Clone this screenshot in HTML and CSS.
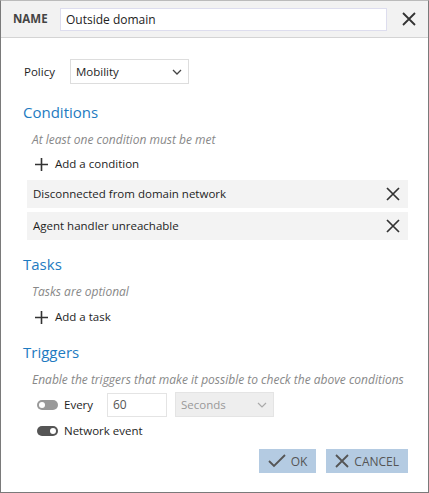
FILE: index.html
```html
<!DOCTYPE html>
<html lang="en">
<head>
    <meta charset="UTF-8">
    <title>Outside domain</title>
    <link rel="stylesheet" href="styles.css">
</head>
<body>
    <div class="dialog">
        <div class="header">
            <span class="name-label">NAME</span>
            <input class="name-input" type="text" value="Outside domain">
            <button class="icon-btn close-btn" title="Close">
                <svg width="16" height="16" viewBox="0 0 16 16"><path d="M2 2L14 14M14 2L2 14" stroke="#333" stroke-width="1.8"/></svg>
            </button>
        </div>

        <div class="content">
            <div class="policy-row">
                <label for="policy">Policy</label>
                <div class="select">
                    <span>Mobility</span>
                    <svg width="10" height="6" viewBox="0 0 10 6"><path d="M1 1L5 5L9 1" fill="none" stroke="#444" stroke-width="1.3"/></svg>
                </div>
            </div>

            <h2>Conditions</h2>
            <p class="hint">At least one condition must be met</p>
            <div class="add-link">
                <svg width="13" height="13" viewBox="0 0 13 13"><path d="M6.5 0V13M0 6.5H13" stroke="#333" stroke-width="1.6"/></svg>
                <span>Add a condition</span>
            </div>
            <div class="item">
                <span>Disconnected from domain network</span>
                <svg width="14" height="14" viewBox="0 0 14 14"><path d="M1 1L13 13M13 1L1 13" stroke="#333" stroke-width="1.7"/></svg>
            </div>
            <div class="item">
                <span>Agent handler unreachable</span>
                <svg width="14" height="14" viewBox="0 0 14 14"><path d="M1 1L13 13M13 1L1 13" stroke="#333" stroke-width="1.7"/></svg>
            </div>

            <h2 class="tasks-title">Tasks</h2>
            <p class="hint">Tasks are optional</p>
            <div class="add-link">
                <svg width="13" height="13" viewBox="0 0 13 13"><path d="M6.5 0V13M0 6.5H13" stroke="#333" stroke-width="1.6"/></svg>
                <span>Add a task</span>
            </div>

            <h2 class="triggers-title">Triggers</h2>
            <p class="hint">Enable the triggers that make it possible to check the above conditions</p>
            <div class="trigger-row">
                <span class="toggle"></span>
                <span class="trigger-label">Every</span>
                <input class="num-input" type="text" value="60">
                <div class="select disabled">
                    <span>Seconds</span>
                    <svg width="10" height="6" viewBox="0 0 10 6"><path d="M1 1L5 5L9 1" fill="none" stroke="#aaa" stroke-width="1.2"/></svg>
                </div>
            </div>
            <div class="trigger-row network-row">
                <span class="toggle on"></span>
                <span>Network event</span>
            </div>

            <div class="actions">
                <button class="btn">
                    <svg width="18" height="14" viewBox="0 0 18 14"><path d="M1 7L6 12L17 1" fill="none" stroke="#555" stroke-width="1.8"/></svg>
                    OK
                </button>
                <button class="btn">
                    <svg width="14" height="14" viewBox="0 0 14 14"><path d="M1 1L13 13M13 1L1 13" fill="none" stroke="#555" stroke-width="1.8"/></svg>
                    CANCEL
                </button>
            </div>
        </div>
    </div>
</body>
</html>
```

FILE: styles.css
```css
body {
    margin: 0;
    font-family: "Open Sans", "Noto Sans", sans-serif;
    font-size: 11.5px;
    line-height: 16px;
    color: #1e1e1e;
    background: #fff;
}
.dialog {
    width: 427px;
    height: 491px;
    border: 1px solid #7a7a7a;
    border-top-color: #bbb;
    background: #fff;
    display: flex;
    flex-direction: column;
}
.header {
    display: flex;
    align-items: center;
    height: 36px;
    flex-shrink: 0;
    padding: 0 0 0 12px;
    background: #f2f2f2;
    border-bottom: 1px solid #d4d4d4;
}
.name-label {
    font-weight: bold;
    color: #444;
    width: 47px;
}
.name-input {
    width: 327px;
    height: 23px;
    box-sizing: border-box;
    border: 1px solid #dde;
    padding: 0 5px;
    font-family: inherit;
    font-size: 12px;
    color: #222;
}
.icon-btn {
    background: none;
    border: none;
    padding: 0;
    cursor: pointer;
}
.close-btn {
    margin-left: 14px;
    display: flex;
}
.content {
    padding: 21px 20px 0 22px;
}
.policy-row {
    display: flex;
    align-items: center;
    padding-left: 1px;
}
.policy-row label {
    width: 46px;
}
.select {
    display: flex;
    align-items: center;
    justify-content: space-between;
    width: 119px;
    height: 25px;
    box-sizing: border-box;
    border: 1px solid #ddd;
    padding: 0 6px 0 5px;
    background: #fff;
}
.select.disabled {
    width: 99px;
    background: #eee;
    border-color: #e4e4e4;
    color: #999;
}
h2 {
    font-weight: normal;
    font-size: 15px;
    line-height: 20px;
    color: #1e7bc1;
    margin: 18px 0 0;
}
.tasks-title {
    margin-top: 14px;
}
.triggers-title {
    margin-top: 17px;
}
.hint {
    font-style: italic;
    font-size: 12px;
    color: #888;
    margin: 10px 0 0 9px;
}
.add-link {
    display: flex;
    align-items: center;
    height: 16px;
    margin: 8px 0 0 12px;
    cursor: pointer;
}
.tasks-title + .hint + .add-link {
    margin-top: 9px;
}
.add-link svg {
    margin-right: 7px;
}
.item {
    display: flex;
    align-items: center;
    justify-content: space-between;
    height: 28px;
    margin: 8px 0 0 4px;
    padding: 0 8px 0 6px;
    background: #f3f3f3;
}
.item + .item {
    margin-top: 4px;
}
.trigger-row {
    display: flex;
    align-items: center;
    margin: 4px 0 0 14px;
}
.network-row {
    margin-top: 6px;
}
.toggle {
    position: relative;
    flex-shrink: 0;
    width: 21px;
    height: 10px;
    border-radius: 5px;
    background: #999;
    margin-right: 6px;
}
.toggle::after {
    content: "";
    position: absolute;
    top: 2px;
    left: 2px;
    width: 6px;
    height: 6px;
    border-radius: 50%;
    background: #fff;
}
.toggle.on {
    background: #555;
}
.toggle.on::after {
    left: 13px;
}
.trigger-label {
    width: 43px;
}
.num-input {
    width: 60px;
    height: 24px;
    box-sizing: border-box;
    border: 1px solid #e4e4e4;
    padding: 0 5px;
    font-family: inherit;
    font-size: 12px;
    color: #555;
    margin-right: 8px;
}
.actions {
    display: flex;
    justify-content: flex-end;
    gap: 10px;
    margin-top: 10px;
}
.btn {
    display: flex;
    align-items: center;
    gap: 5px;
    height: 24px;
    padding: 0 9px;
    border: none;
    background: #b4cbe2;
    color: #555;
    font-family: inherit;
    font-size: 12px;
    cursor: pointer;
}
```
